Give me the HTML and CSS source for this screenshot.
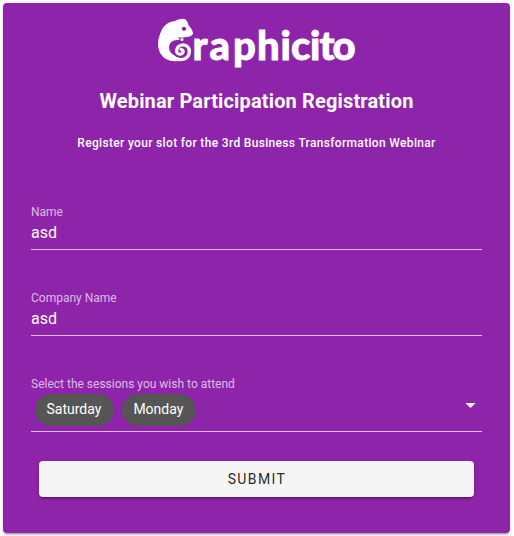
FILE: index.html
```html
<!DOCTYPE html>
<html lang="en">
<head>
<meta charset="utf-8">
<title>Webinar Participation Registration</title>
<link rel="stylesheet" href="styles.css">
</head>
<body>
<main class="card">
  <svg class="logo" viewBox="0 0 200 52" role="img" aria-label="Graphicito">
    <path class="logo-fill" d="M17 3 Q20 1 23 1 Q27 0 29 3 L31 8 Q35 12 35 16 Q33 19 28 19 Q23 20 19 19 Q23 21 21 22 Q12 21 11 29 Q11 35 17 38 L21 43 Q8 45 2 35 Q-2 26 2 16 Q5 7 12 4Z"/>
    <path class="logo-tail" d="M14 38 C19 43 29 43 31 36 C33 30 28 26 24 27 C18 28 17 35 21 36 C25 37 27 32 23 31.5"/>
    <circle class="logo-fill" cx="24" cy="21.5" r="1.5"/>
    <circle class="logo-eye" cx="26" cy="10.8" r="2.1"/>
    <text class="logo-text" y="42" x="34.5 51.5 75 99 122.6 133 152 161.5 174.4">raphicito</text>
  </svg>
  <h1 class="title">Webinar Participation Registration</h1>
  <p class="subtitle">Register your slot for the 3rd Business Transformation Webinar</p>
  <form class="form">
    <div class="field">
      <div class="label">Name</div>
      <div class="value">asd</div>
    </div>
    <div class="field">
      <div class="label">Company Name</div>
      <div class="value">asd</div>
    </div>
    <div class="field field-select">
      <div class="label">Select the sessions you wish to attend</div>
      <div class="selection">
        <span class="chip">Saturday</span>
        <span class="chip">Monday</span>
        <svg class="arrow" viewBox="0 0 10 5"><path d="M0 0h10L5 5z"/></svg>
      </div>
    </div>
    <button class="submit" type="button">Submit</button>
  </form>
</main>
</body>
</html>
```
FILE: styles.css
```css
* { box-sizing: border-box; }
body {
  margin: 0;
  padding: 3px 4px 3px 3px;
  background: #fff;
  font-family: Roboto, sans-serif;
}
.card {
  display: flex;
  flex-direction: column;
  height: 530px;
  padding: 15px 28px 0;
  border-radius: 4px;
  background: #8e24aa;
  color: #fff;
  box-shadow: 0 3px 1px -2px rgba(0,0,0,.2), 0 2px 2px rgba(0,0,0,.14), 0 1px 5px rgba(0,0,0,.12);
}
.logo { width: 200px; height: 52px; margin-left: 127px; overflow: visible; }
.logo-fill { fill: #fff; }
.logo-eye { fill: #8e24aa; }
.logo-tail { fill: none; stroke: #fff; stroke-width: 3.2; stroke-linecap: round; }
.logo-text { fill: #fff; stroke: #fff; stroke-width: .8; font: 900 40px Lato, sans-serif; }
.title {
  margin: 15px 0 0;
  font-size: 20px;
  line-height: 32px;
  font-weight: 700;
  letter-spacing: .15px;
  text-align: center;
}
.subtitle {
  margin: 16px -10px 0;
  font-size: 12px;
  line-height: 20px;
  font-weight: 500;
  letter-spacing: .33px;
  text-align: center;
}
.form { display: flex; flex-direction: column; margin-top: 50px; }
.field { height: 47px; margin-bottom: 39px; border-bottom: 1px solid rgba(255,255,255,.7); }
.field-select { height: 57px; margin-bottom: 29px; }
.label { height: 17px; font-size: 12px; line-height: 18px; color: rgba(255,255,255,.7); }
.value { font-size: 16px; line-height: 25px; }
.selection { display: flex; gap: 8px; padding: 2px 6px 0 4px; }
.chip {
  height: 32px;
  padding: 0 12.5px 0 11.5px;
  border-radius: 16px;
  background: #555;
  font-size: 14px;
  line-height: 31px;
}
.arrow { width: 11px; height: 5px; margin: 9px 0 0 auto; fill: #fff; }
.submit {
  height: 36px;
  margin: 0 8px;
  padding: 0 0 0 1px;
  border: 0;
  border-radius: 4px;
  background: #f5f5f5;
  color: rgba(0,0,0,.87);
  font: 400 14px/36px Roboto, sans-serif;
  letter-spacing: 1.4px;
  text-transform: uppercase;
  box-shadow: 0 3px 1px -2px rgba(0,0,0,.2), 0 2px 2px rgba(0,0,0,.14), 0 1px 5px rgba(0,0,0,.12);
}
```
